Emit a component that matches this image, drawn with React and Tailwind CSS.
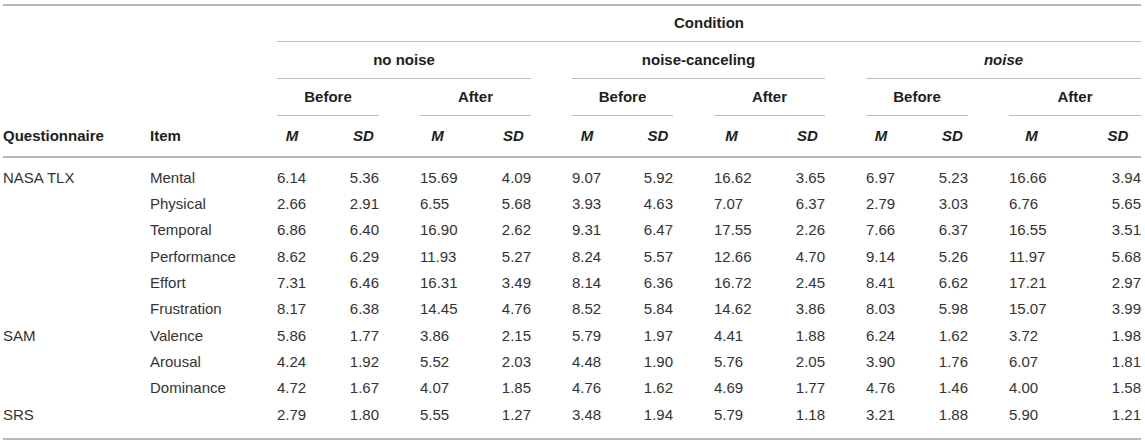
import React from 'react';

// columns: Questionnaire, Item, then M/SD pairs for Before/After of each condition
const rows = [
  ['NASA TLX', 'Mental', '6.14', '5.36', '15.69', '4.09', '9.07', '5.92', '16.62', '3.65', '6.97', '5.23', '16.66', '3.94'],
  ['', 'Physical', '2.66', '2.91', '6.55', '5.68', '3.93', '4.63', '7.07', '6.37', '2.79', '3.03', '6.76', '5.65'],
  ['', 'Temporal', '6.86', '6.40', '16.90', '2.62', '9.31', '6.47', '17.55', '2.26', '7.66', '6.37', '16.55', '3.51'],
  ['', 'Performance', '8.62', '6.29', '11.93', '5.27', '8.24', '5.57', '12.66', '4.70', '9.14', '5.26', '11.97', '5.68'],
  ['', 'Effort', '7.31', '6.46', '16.31', '3.49', '8.14', '6.36', '16.72', '2.45', '8.41', '6.62', '17.21', '2.97'],
  ['', 'Frustration', '8.17', '6.38', '14.45', '4.76', '8.52', '5.84', '14.62', '3.86', '8.03', '5.98', '15.07', '3.99'],
  ['SAM', 'Valence', '5.86', '1.77', '3.86', '2.15', '5.79', '1.97', '4.41', '1.88', '6.24', '1.62', '3.72', '1.98'],
  ['', 'Arousal', '4.24', '1.92', '5.52', '2.03', '4.48', '1.90', '5.76', '2.05', '3.90', '1.76', '6.07', '1.81'],
  ['', 'Dominance', '4.72', '1.67', '4.07', '1.85', '4.76', '1.62', '4.69', '1.77', '4.76', '1.46', '4.00', '1.58'],
  ['SRS', '', '2.79', '1.80', '5.55', '1.27', '3.48', '1.94', '5.79', '1.18', '3.21', '1.88', '5.90', '1.21'],
];

const groups = [
  { label: 'no noise', italic: false },
  { label: 'noise-canceling', italic: false },
  { label: 'noise', italic: true },
];

const App = () => {
  return (
    <div className="min-h-screen bg-white pl-[3px] pt-[4px] font-['Liberation_Sans',Arial,sans-serif] text-[15px] text-[#333]">
      <div className="grid w-fit grid-cols-[106px_86px_30px_31px_35px_35px_30px_30px_35px_35px_30px_31px_45px_46px] gap-x-[41px] border-t-2 border-b-2 border-[#b9b9b9]">
        {/* row 1 */}
        <div className="col-span-2" />
        <div className="col-span-12 h-[36px] border-b border-[#bdbdbd] flex items-center justify-center font-bold text-[#1e1e1e]">
          Condition
        </div>

        {/* row 2 */}
        <div className="col-span-2" />
        {groups.map((g) => (
          <div
            key={g.label}
            className={`col-span-4 h-[37px] border-b border-[#bdbdbd] flex items-center justify-center font-bold text-[#1e1e1e] ${g.italic ? 'italic' : ''}`}
          >
            {g.label}
          </div>
        ))}

        {/* row 3 */}
        <div className="col-span-2" />
        {[0, 1, 2, 3, 4, 5].map((i) => (
          <div key={i} className="col-span-2 h-[37px] border-b border-[#bdbdbd] flex items-center justify-center font-bold text-[#1e1e1e]">
            {i % 2 === 0 ? 'Before' : 'After'}
          </div>
        ))}

        {/* row 4 */}
        <div className="h-[40px] flex items-center font-bold text-[#1e1e1e] whitespace-nowrap">Questionnaire</div>
        <div className="h-[40px] flex items-center font-bold text-[#1e1e1e]">Item</div>
        {[0, 1, 2, 3, 4, 5].map((i) => (
          <React.Fragment key={i}>
            <div className="h-[40px] flex items-center justify-center font-bold italic text-[#1e1e1e]">M</div>
            <div className="h-[40px] flex items-center justify-center font-bold italic text-[#1e1e1e]">SD</div>
          </React.Fragment>
        ))}

        <div className="col-span-full border-t-2 border-[#b9b9b9]" />
        <div className="col-span-full h-[7px]" />

        {rows.map((r, ri) => (
          <React.Fragment key={ri}>
            {r.map((cell, ci) => (
              <div
                key={ci}
                className={`h-[26.3px] flex items-center whitespace-nowrap ${ci >= 2 && ci % 2 === 1 ? 'justify-end' : 'justify-start'}`}
              >
                {cell}
              </div>
            ))}
          </React.Fragment>
        ))}

        <div className="col-span-full h-[10px]" />
      </div>
    </div>
  );
};

export default App;
